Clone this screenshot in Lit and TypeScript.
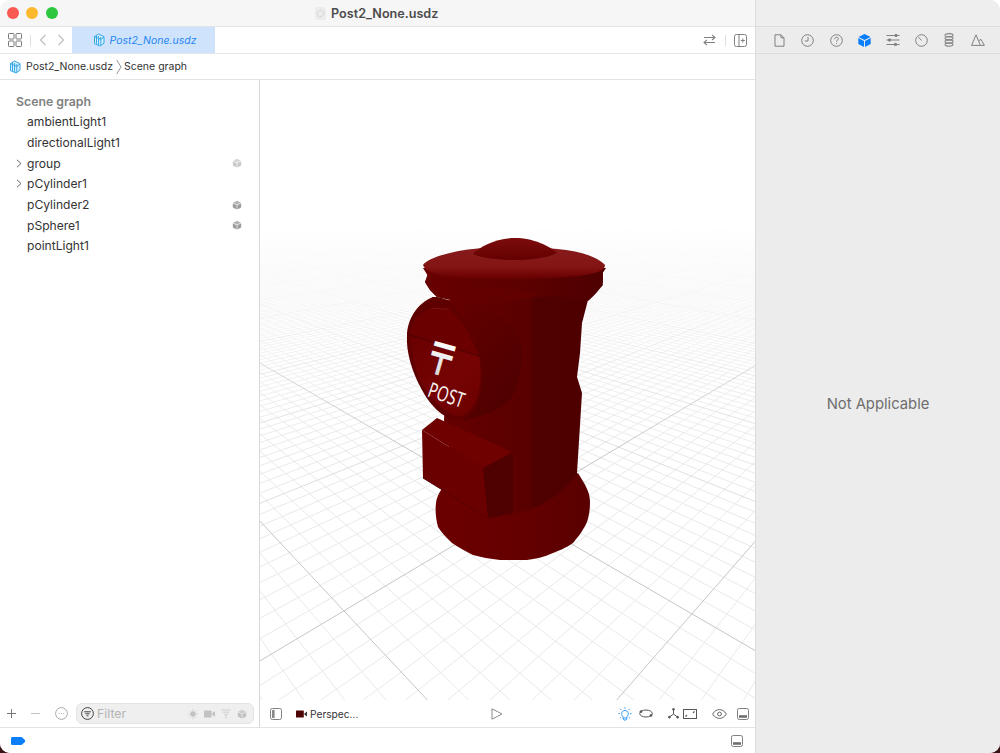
import { LitElement, html, css, svg } from "lit";
import { customElement } from "lit/decorators.js";

const O = { x: 513, y: 510 };
const VU = { x: -64, y: 175 };
const VV = { x: 1075, y: 175 };
const P = -0.2367;
const Q = -0.2313;

function project(u: number, v: number) {
  const w = 1 + u * P + v * Q;
  return {
    x: (O.x + u * P * VU.x + v * Q * VV.x) / w,
    y: (O.y + u * P * VU.y + v * Q * VV.y) / w,
  };
}

function gridPaths() {
  let minor = "";
  let mid = "";
  let major = "";
  const far = -40;
  const seg = (a: { x: number; y: number }, b: { x: number; y: number }) =>
    `M${a.x.toFixed(1)} ${a.y.toFixed(1)}L${b.x.toFixed(1)} ${b.y.toFixed(1)}`;
  for (let i = -400; i <= 60; i++) {
    const t = i / 10;
    const endU = (0.96 + t * Q) / -P;
    const endV = (0.96 + t * P) / -Q;
    let d = "";
    if (endU > far) d += seg(project(far, t), project(endU, t));
    if (endV > far) d += seg(project(t, far), project(t, endV));
    if (i === 0 || i === 10) major += d;
    else if (i % 10 === 0) mid += d;
    else minor += d;
  }
  return { minor, mid, major };
}
const GRID = gridPaths();

const cube = (fill: string, size = 12) => svg`<svg width=${size} height=${size} viewBox="0 0 12 12">
  <path d="M6 .8 10.8 3.3 6 5.8 1.2 3.3Z" fill=${fill} opacity=".75"/>
  <path d="M1 4 5.6 6.4V11.4L1 8.9Z" fill=${fill}/>
  <path d="M11 4 6.4 6.4V11.4L11 8.9Z" fill=${fill}/></svg>`;

const usdz = svg`<svg width="13" height="14" viewBox="0 0 13 14" fill="none" stroke="#35a7e8" stroke-width="1">
  <path d="M6.5 1 12 3.6V10.2L8 13 2.5 10.6V3.6Z" fill="#d7effb"/>
  <path d="M4.5 2.2V10.8M6.6 3V12M8.8 4V12.4M2.5 3.6 8.8 6.4 12 4"/></svg>`;

const ICON = {
  grid: svg`<svg width="14" height="14" viewBox="0 0 14 14" fill="none" stroke="#777" stroke-width="1"><rect x=".5" y=".5" width="5.5" height="5.5" rx=".8"/><rect x="8" y=".5" width="5.5" height="5.5" rx=".8"/><rect x=".5" y="8" width="5.5" height="5.5" rx=".8"/><rect x="8" y="8" width="5.5" height="5.5" rx=".8"/></svg>`,
  back: svg`<svg width="8" height="12" viewBox="0 0 8 12" fill="none" stroke="#bdbdbd" stroke-width="1.1"><path d="M6.5 1 1.5 6 6.5 11"/></svg>`,
  fwd: svg`<svg width="8" height="12" viewBox="0 0 8 12" fill="none" stroke="#bdbdbd" stroke-width="1.1"><path d="M1.5 1 6.5 6 1.5 11"/></svg>`,
  crumb: svg`<svg width="6" height="16" viewBox="0 0 6 16" fill="none" stroke="#8a8a8a" stroke-width=".9"><path d="M.7 1 5 8 .7 15"/></svg>`,
  swap: svg`<svg width="13" height="12" viewBox="0 0 13 12" fill="none" stroke="#808080" stroke-width="1.1"><path d="M1 3.5H12M9 .8 12 3.5 9 6M12 8.5H1M4 5.8 1 8.5 4 11.2"/></svg>`,
  split: svg`<svg width="13" height="13" viewBox="0 0 13 13" fill="none" stroke="#808080" stroke-width="1"><rect x=".5" y=".5" width="12" height="12" rx="2"/><path d="M5 .5V12.5"/><path d="M8.8 4.5V8.5M6.8 6.5H10.8" stroke-width="1"/></svg>`,
  doc: svg`<svg width="11" height="13" viewBox="0 0 11 13" fill="none" stroke="#808080" stroke-width="1"><path d="M1 .8H7L10 3.8V12.2H1Z"/><path d="M7 .8V3.8H10"/></svg>`,
  clock: svg`<svg width="13" height="13" viewBox="0 0 13 13" fill="none" stroke="#808080" stroke-width="1"><circle cx="6.5" cy="6.5" r="5.8"/><path d="M7 3V7H3.8"/></svg>`,
  help: svg`<svg width="13" height="13" viewBox="0 0 13 13" fill="none" stroke="#808080" stroke-width="1"><circle cx="6.5" cy="6.5" r="5.8"/><path d="M4.7 5.2C4.7 3.9 5.6 3.3 6.5 3.3 7.5 3.3 8.3 4 8.3 4.9 8.3 6.2 6.5 6.2 6.5 7.8M6.5 9V9.9"/></svg>`,
  blue: svg`<svg width="13" height="13" viewBox="0 0 13 13"><path d="M6.5 0 12.5 3 6.5 6 .5 3Z" fill="#0a7dfa"/><path d="M.3 4 6 6.9V13L.3 10Z" fill="#0a7dfa"/><path d="M12.7 4 7 6.9V13L12.7 10Z" fill="#0a7dfa"/></svg>`,
  sliders: svg`<svg width="14" height="12" viewBox="0 0 14 12" fill="none" stroke="#808080" stroke-width="1"><path d="M.5 1.5H13.5M.5 6H13.5M.5 10.5H13.5"/><circle cx="10" cy="1.5" r="1.2" fill="#808080"/><circle cx="3.5" cy="6" r="1.2" fill="#808080"/><circle cx="9.5" cy="10.5" r="1.2" fill="#808080"/></svg>`,
  gauge: svg`<svg width="13" height="13" viewBox="0 0 13 13" fill="none" stroke="#808080" stroke-width="1"><circle cx="6.5" cy="6.5" r="5.8"/><path d="M6.5 6.5 3.6 3.2"/></svg>`,
  spring: svg`<svg width="10" height="14" viewBox="0 0 10 14" fill="none" stroke="#808080" stroke-width="1.1"><ellipse cx="5" cy="2.2" rx="4" ry="1.6"/><ellipse cx="5" cy="5.3" rx="4" ry="1.6"/><ellipse cx="5" cy="8.5" rx="4" ry="1.6"/><ellipse cx="5" cy="11.6" rx="4" ry="1.6"/></svg>`,
  mount: svg`<svg width="14" height="12" viewBox="0 0 14 12" fill="none" stroke="#808080" stroke-width="1"><path d="M.6 11.4 5 .8 9.4 11.4ZM8 6.6 10 5.4 13.4 11.4H9.4"/></svg>`,
  plus: svg`<svg width="11" height="11" viewBox="0 0 11 11" stroke="#777" stroke-width="1"><path d="M5.5 1V10M1 5.5H10"/></svg>`,
  minus: svg`<svg width="11" height="11" viewBox="0 0 11 11" stroke="#c4c4c4" stroke-width="1"><path d="M1 5.5H10"/></svg>`,
  more: svg`<svg width="13" height="13" viewBox="0 0 13 13" fill="none" stroke="#a0a0a0" stroke-width=".9"><circle cx="6.5" cy="6.5" r="5.9"/><path d="M3.8 6.5H4.6M6.1 6.5H6.9M8.4 6.5H9.2" stroke-width="1"/></svg>`,
  filter: svg`<svg width="13" height="13" viewBox="0 0 13 13" fill="none" stroke="#444" stroke-width="1"><circle cx="6.5" cy="6.5" r="5.9"/><path d="M3.2 4.8H9.8M4.4 6.8H8.6M5.6 8.8H7.4"/></svg>`,
  sun: svg`<svg width="10" height="10" viewBox="0 0 10 10" fill="#c2c2c2" stroke="#c2c2c2" stroke-width=".8"><circle cx="5" cy="5" r="2.4"/><path d="M5 0V1.4M5 8.6V10M0 5H1.4M8.6 5H10M1.5 1.5 2.4 2.4M7.6 7.6 8.5 8.5M8.5 1.5 7.6 2.4M1.5 8.5 2.4 7.6"/></svg>`,
  cam: svg`<svg width="11" height="8" viewBox="0 0 11 8" fill="#c2c2c2"><rect y=".5" width="7.6" height="7" rx=".8"/><path d="M8 3.6 11 1V7L8 4.6Z"/></svg>`,
  ant: svg`<svg width="10" height="10" viewBox="0 0 10 10" fill="none" stroke="#cfcfcf" stroke-width="1"><path d="M.3 1H9.7M1.8 3.2H8.2M3.2 5.4H6.8M5 5.4V10"/></svg>`,
  side: svg`<svg width="12" height="12" viewBox="0 0 12 12" fill="none" stroke="#808080" stroke-width="1"><rect x=".5" y=".5" width="11" height="11" rx="1.8"/><rect x="2" y="2" width="2.6" height="8" fill="#8a8a8a" stroke="none"/></svg>`,
  panel: svg`<svg width="12" height="12" viewBox="0 0 12 12" fill="none" stroke="#808080" stroke-width="1"><rect x=".5" y=".5" width="11" height="11" rx="1.8"/><rect x="2" y="7.2" width="8" height="2.6" fill="#707070" stroke="none"/></svg>`,
  redcam: svg`<svg width="11" height="8" viewBox="0 0 11 8" fill="#4e0505"><rect y=".4" width="7.8" height="7.2" rx=".5"/><path d="M8.4 3.6 11 1.6V6.4L8.4 4.6Z" fill="#333"/></svg>`,
  play: svg`<svg width="12" height="12" viewBox="0 0 12 12" fill="none" stroke="#8a8a8a" stroke-width="1"><path d="M1 .8 11 6 1 11.2Z"/></svg>`,
  bulb: svg`<svg width="14" height="14" viewBox="0 0 14 14" fill="none" stroke="#2f97f5" stroke-width="1"><path d="M5.2 10.2C4.6 8.8 3.7 8.4 3.7 6.6 3.7 4.8 5.2 3.5 7 3.5 8.8 3.5 10.3 4.8 10.3 6.6 10.3 8.4 9.4 8.8 8.8 10.2V12.2C8.2 13.4 5.8 13.4 5.2 12.2ZM5.2 11H8.8"/><path d="M7 .2V1.8M.4 6.6H2M12 6.6H13.6M2.2 1.8 3.3 2.9M11.8 1.8 10.7 2.9M2.2 11 3.2 10.2M11.8 11 10.8 10.2" stroke-dasharray="1.5 .4"/></svg>`,
  orbit: svg`<svg width="14" height="9" viewBox="0 0 14 9" fill="none" stroke="#555" stroke-width="1"><ellipse cx="7" cy="4.5" rx="6.3" ry="3.5"/><circle cx="2" cy="2.6" r=".9" fill="#555"/><circle cx="12" cy="6.4" r=".9" fill="#555"/></svg>`,
  axes: svg`<svg width="11" height="11" viewBox="0 0 11 11" fill="none" stroke="#555" stroke-width="1"><path d="M5.5 1.5V6L1.5 9M5.5 6 9.5 9"/><circle cx="5.5" cy="1.3" r=".9" fill="#555"/><circle cx="1.4" cy="9.2" r=".9" fill="#555"/><circle cx="9.6" cy="9.2" r=".9" fill="#555"/></svg>`,
  frame: svg`<svg width="14" height="10" viewBox="0 0 14 10" fill="none" stroke="#555" stroke-width="1"><rect x=".5" y=".5" width="13" height="9"/><path d="M2.5 7.5 4 6.2M11.5 2.5 10 3.8" stroke-width="1.3"/></svg>`,
  eye: svg`<svg width="15" height="10" viewBox="0 0 15 10" fill="none" stroke="#666" stroke-width="1"><path d="M.6 5C2.6 1.8 5 .6 7.5 .6 10 .6 12.4 1.8 14.4 5 12.4 8.2 10 9.4 7.5 9.4 5 9.4 2.6 8.2 .6 5Z"/><circle cx="7.5" cy="5" r="1.9"/></svg>`,
  tag: svg`<svg width="14" height="8" viewBox="0 0 14 8"><path d="M1.5 0H10.5L14 3V5L10.5 8H1.5C.5 8 0 7.5 0 6.5V1.5C0 .5.5 0 1.5 0Z" fill="#0a7dfa"/></svg>`,
  chev: svg`<svg width="6" height="9" viewBox="0 0 6 9" fill="none" stroke="#666" stroke-width="1"><path d="M1 .8 5 4.5 1 8.2"/></svg>`,
};

const postBox = svg`
  <defs>
    <linearGradient id="bodyG" x1="440" x2="590" y1="0" y2="0" gradientUnits="userSpaceOnUse">
      <stop offset="0" stop-color="#660000"/><stop offset=".4" stop-color="#5e0000"/>
      <stop offset=".6" stop-color="#590000"/><stop offset=".635" stop-color="#4f0000"/><stop offset="1" stop-color="#4e0000"/>
    </linearGradient>
    <linearGradient id="baseG" x1="436" x2="590" y1="0" y2="0" gradientUnits="userSpaceOnUse">
      <stop offset="0" stop-color="#6c0000"/><stop offset=".55" stop-color="#640000"/><stop offset="1" stop-color="#5a0000"/>
    </linearGradient>
    <linearGradient id="capG" x1="0" x2="0" y1="250" y2="280" gradientUnits="userSpaceOnUse">
      <stop offset="0" stop-color="#861a1a"/><stop offset=".55" stop-color="#841515"/><stop offset=".85" stop-color="#700404"/><stop offset="1" stop-color="#640000"/>
    </linearGradient>
    <linearGradient id="domeG" x1="0" x2="0" y1="238" y2="260" gradientUnits="userSpaceOnUse">
      <stop offset="0" stop-color="#7c0c0c"/><stop offset="1" stop-color="#650000"/>
    </linearGradient>
    <linearGradient id="rimG" x1="424" x2="604" y1="0" y2="0" gradientUnits="userSpaceOnUse">
      <stop offset="0" stop-color="#680000"/><stop offset=".55" stop-color="#5c0000"/><stop offset="1" stop-color="#4e0000"/>
    </linearGradient>
    <linearGradient id="drumG" x1="435" x2="525" y1="310" y2="380" gradientUnits="userSpaceOnUse">
      <stop offset="0" stop-color="#680000"/><stop offset=".5" stop-color="#5a0000"/><stop offset="1" stop-color="#500000"/>
    </linearGradient>
    <linearGradient id="lowG" x1="410" x2="480" y1="340" y2="420" gradientUnits="userSpaceOnUse">
      <stop offset="0" stop-color="#6a0000"/><stop offset=".55" stop-color="#760303"/><stop offset="1" stop-color="#6a0000"/>
    </linearGradient>
    <linearGradient id="markG" x1="0" x2="0" y1="-14" y2="18" gradientUnits="userSpaceOnUse">
      <stop offset="0" stop-color="#ffffff"/><stop offset="1" stop-color="#cfcfcf"/>
    </linearGradient>
  </defs>
  <path d="M437 297 450 300 444 420 455 480 470 525 520 525 585 495 580 477 577 473 582 393 577 377 580 353 582 323 588 300 603 283V270H429L425 282 430 290Z" fill="url(#bodyG)"/>
  <path d="M423 268 428 276 425 282 430 290 437 297C455 299 500 300 540 297 560 296 578 298 588 301 592 298 598 291 603 285L600 277 606 268Z" fill="url(#rimG)"/>
  <path d="M457 282C485 284 515 288 537 295 520 300 495 304 477 305 460 300 452 292 457 282Z" fill="#620000"/>
  <path d="M436 503C437 494 444 484 455 474L488 519 515 513C535 510 560 498 578 473L581 478C586 486 590 493 590 502 590 510 589 516 587 522 582 533 576 539 573 543 566 548 558 551 553 553 544 557 535 559 527 560H500C490 559 481 557 473 555 465 551 458 547 452 543 446 537 441 532 438 527 436 519 435 511 436 503Z" fill="url(#baseG)"/>
  <path d="M423 265C427 259 446 252 473 249 500 246 530 246 557 249 578 251 597 256 605 265 605 270 598 273 585 275 550 280 490 280 450 277 436 275 425 271 423 265Z" fill="url(#capG)"/>
  <path d="M473 254C480 246 497 238 515 238 533 238 550 246 557 253 548 258 530 260 515 260 498 260 481 258 473 254Z" fill="url(#domeG)"/>
  <path d="M432 297C455 300 480 308 500 317 516 326 523 340 522 355 521 375 517 393 507 403 497 411 483 416 465 420L445 406Z" fill="url(#drumG)"/>
  <path d="M407 336C407 320 417 303 433 297 445 296 458 305 468 326 476 342 482 360 482 380 482 398 474 416 462 420 448 422 432 409 422 390 412 372 406 352 407 336Z" fill="#5e0000"/>
  <path d="M410 335C411 321 420 311 431 309 438 308 444 311 449 309 458 316 470 333 476 350L479 356Z" fill="#6a0000"/>
  <path d="M431 309C437 307 443 310 449 309" stroke="#7c0e0e" stroke-width="1.2" fill="none"/>
  <path d="M410 335 479 356C482 370 481 388 476 400 471 412 463 417 456 416 444 412 431 400 423 386 415 372 411 352 410 335Z" fill="url(#lowG)"/>
  <path d="M410 335 479 356" stroke="#4e0000" stroke-width="1"/>
  <g transform="translate(441 360) rotate(16) scale(.95 1.32)">
    <text x="0" y="12" text-anchor="middle" font-family="'Noto Sans CJK JP',sans-serif" font-weight="700" font-size="34" fill="url(#markG)">〒</text>
  </g>
  <g transform="translate(444 402) rotate(19)">
    <text x="0" y="0" text-anchor="middle" font-family="'Noto Sans','Liberation Sans',sans-serif" font-size="21" fill="#f6f2f2" textLength="37" lengthAdjust="spacingAndGlyphs">POST</text>
  </g>
  <path d="M422 430 437 418 512 452 483 468Z" fill="#6f0101"/>
  <path d="M422 430 483 468 488 518 423 478Z" fill="#6b0000"/>
  <path d="M483 468 513 453V513L488 518Z" fill="#4f0000"/>
  <path d="M423 478 488 518" stroke="#570000" stroke-width="1"/>
`;

@customElement("app-root")
export class AppRoot extends LitElement {
  static styles = css`
    :host { display: block; width: 1000px; height: 753px; overflow: hidden;
      background: linear-gradient(#fff 50%, #3a1414 50%);
      font-family: Inter, "Liberation Sans", sans-serif; color: #2b2b2b; }
    svg { display: block; flex: none; }
    .window { width: 1000px; height: 753px; border-radius: 10px; overflow: hidden;
      display: grid; grid-template-columns: 755px 245px; background: #fff; }
    .left { display: flex; flex-direction: column; min-width: 0; background: #fff; }
    .right { background: #ececec; border-left: 1px solid #dcdcdc; display: flex; flex-direction: column; }
    .title { height: 26px; background: #f6f6f6; border-bottom: 1px solid #e4e4e4; display: flex; align-items: center; padding-left: 7px; }
    .lights { display: flex; gap: 7.3px; }
    .light { width: 12px; height: 12px; border-radius: 50%; }
    .red { background: #fb5a53; } .yellow { background: #fdb92e; } .green { background: #2cc73f; }
    .doc-name { display: flex; align-items: center; gap: 5px; margin-left: 257.5px; font-size: 12.6px; font-weight: 600; color: #4b4b4b; }
    .doc-ic { width: 11px; height: 13px; background: #ececec; border-radius: 2px; color: #aaa; }
    .tabs { height: 26px; border-bottom: 1px solid #e6e6e6; display: flex; align-items: center; padding-left: 8px; }
    .tabs .sep { width: 1px; height: 11px; background: #e0e0e0; margin: 0 7.5px 0 8px; }
    .gap14 { margin-left: 10px; }
    .tab { height: 26px; width: 143px; margin-left: 7px; background: #cfe4fc; display: flex; align-items: center; gap: 5px; padding-left: 20px; box-sizing: border-box;
      color: #1f85f3; font-style: italic; font-size: 10.5px; }
    .spacer { flex: 1; }
    .tabs .end { display: flex; align-items: center; padding-right: 8px; }
    .tabs .end .sep { margin: 0 8.5px; }
    .crumbs { height: 25px; border-bottom: 1px solid #e3e3e3; display: flex; align-items: center; padding-left: 8px; font-size: 10.5px; color: #333; }
    .crumbs .name { margin-left: 5px; }
    .crumbs .div { margin: 0 2px 0 3px; }
    .main { height: 620px; display: grid; grid-template-columns: 260px 1fr; }
    .tree { border-right: 1px solid #d8d8d8; padding-top: 11.5px; }
    .head { font-size: 12.3px; font-weight: 600; color: #808080; padding-left: 16px; height: 20px; line-height: 20px; }
    .row { display: grid; grid-template-columns: 27px 1fr 12px; align-items: center; height: 20.7px; padding-right: 15px; font-size: 12.1px; color: #333; }
    .row .ch { justify-self: end; margin-right: 5px; }
    .canvas { display: block; width: 495px; height: 620px; background: #fff; }
    .bars { display: grid; grid-template-columns: 260px 1fr; height: 27px; }
    .side-bar { border-right: 1px solid #d8d8d8; display: flex; align-items: center; padding-left: 6px; }
    .bar-minus { margin-left: 13px; }
    .bar-more { margin-left: 14px; }
    .filter { margin-left: 8px; width: 178px; height: 21px; box-sizing: border-box; background: #efefef; border: 1px solid #e4e4e4; border-radius: 6px;
      display: flex; align-items: center; padding: 0 6px 0 4px; color: #b4b4b4; font-size: 12.3px; }
    .filter span { margin-left: 3px; }
    .filter .g { display: flex; align-items: center; gap: 6px; }
    .view-bar { display: flex; align-items: center; padding-left: 10px; }
    .pers { font-size: 10.2px; color: #333; margin-left: 3.5px; width: 47px; white-space: nowrap; }
    .cam { margin-left: 13.5px; }
    .play { margin-left: 134px; }
    .bulb { margin-left: 115px; }
    .orb { margin-left: 7px; }
    .ax { margin-left: 14.5px; }
    .fr { margin-left: 4.5px; }
    .ey { margin-left: 14.5px; }
    .pn { margin-left: 10.5px; }
    .status { height: 25px; border-top: 1px solid #e3e3e3; display: flex; align-items: center; padding: 0 12px 0 11px; }
    .r-top { height: 26px; background: #eeeeee; border-bottom: 1px solid #dcdcdc; }
    .r-tabs { height: 26px; border-bottom: 1px solid #dcdcdc; display: grid; grid-template-columns: repeat(8, 28.3px); align-items: center; justify-items: center; padding-left: 9.5px; }
    .na { flex: 1; display: flex; align-items: center; justify-content: center; font-size: 14.8px; color: #6e6e6e; padding-bottom: 0; }
  `;

  render() {
    const rows = [
      { n: "ambientLight1" },
      { n: "directionalLight1" },
      { n: "group", ch: true, cube: "#c9c9c9" },
      { n: "pCylinder1", ch: true },
      { n: "pCylinder2", cube: "#9c9c9c" },
      { n: "pSphere1", cube: "#9c9c9c" },
      { n: "pointLight1" },
    ];
    return html`<div class="window">
      <div class="left">
        <div class="title">
          <div class="lights"><div class="light red"></div><div class="light yellow"></div><div class="light green"></div></div>
          <div class="doc-name">
            <svg class="doc-ic" width="11" height="13" viewBox="0 0 11 13" fill="none" stroke="#b5b5b5" stroke-width=".8" stroke-dasharray="1 1"><circle cx="5.5" cy="6.5" r="3.2"/></svg>
            Post2_None.usdz
          </div>
        </div>
        <div class="tabs">
          ${ICON.grid}<div class="sep"></div>${ICON.back}<span class="gap14"></span>${ICON.fwd}
          <div class="tab">${usdz}Post2_None.usdz</div>
          <div class="spacer"></div>
          <div class="end">${ICON.swap}<div class="sep"></div>${ICON.split}</div>
        </div>
        <div class="crumbs">${usdz}<span class="name">Post2_None.usdz</span><span class="div">${ICON.crumb}</span>Scene graph</div>
        <div class="main">
          <div class="tree">
            <div class="head">Scene graph</div>
            ${rows.map((r) => html`<div class="row">
              <span class="ch">${r.ch ? ICON.chev : ""}</span>
              <span>${r.n}</span>
              <span>${r.cube ? cube(r.cube, 10) : ""}</span>
            </div>`)}
          </div>
          <svg class="canvas" viewBox="260 80 495 620">
            <defs>
              <linearGradient id="fade" x1="0" x2="0" y1="80" y2="700" gradientUnits="userSpaceOnUse">
                <stop offset="0" stop-color="#fff"/>
                <stop offset=".235" stop-color="#fff"/>
                <stop offset=".33" stop-color="#fff" stop-opacity=".78"/>
                <stop offset=".48" stop-color="#fff" stop-opacity=".3"/>
                <stop offset=".62" stop-color="#fff" stop-opacity="0"/>
              </linearGradient>
            </defs>
            <path d=${GRID.minor} stroke="#e6e6e6" stroke-width=".9" fill="none"/>
            <path d=${GRID.mid} stroke="#dadada" stroke-width=".9" fill="none"/>
            <path d=${GRID.major} stroke="#c6c6c6" stroke-width="1" fill="none"/>
            <rect x="260" y="80" width="495" height="620" fill="url(#fade)"/>
            ${postBox}
          </svg>
        </div>
        <div class="bars">
          <div class="side-bar">
            ${ICON.plus}<span class="bar-minus">${ICON.minus}</span><span class="bar-more">${ICON.more}</span>
            <div class="filter">
              ${ICON.filter}<span>Filter</span><div class="spacer"></div>
              <div class="g">${ICON.sun}${ICON.cam}${ICON.ant}${cube("#c2c2c2", 10)}</div>
            </div>
          </div>
          <div class="view-bar">
            ${ICON.side}<span class="cam">${ICON.redcam}</span><span class="pers">Perspec...</span>
            <span class="play">${ICON.play}</span><span class="bulb">${ICON.bulb}</span><span class="orb">${ICON.orbit}</span>
            <span class="ax">${ICON.axes}</span><span class="fr">${ICON.frame}</span><span class="ey">${ICON.eye}</span><span class="pn">${ICON.panel}</span>
          </div>
        </div>
        <div class="status">${ICON.tag}<div class="spacer"></div>${ICON.panel}</div>
      </div>
      <div class="right">
        <div class="r-top"></div>
        <div class="r-tabs">${ICON.doc}${ICON.clock}${ICON.help}${ICON.blue}${ICON.sliders}${ICON.gauge}${ICON.spring}${ICON.mount}</div>
        <div class="na">Not Applicable</div>
      </div>
    </div>`;
  }
}
